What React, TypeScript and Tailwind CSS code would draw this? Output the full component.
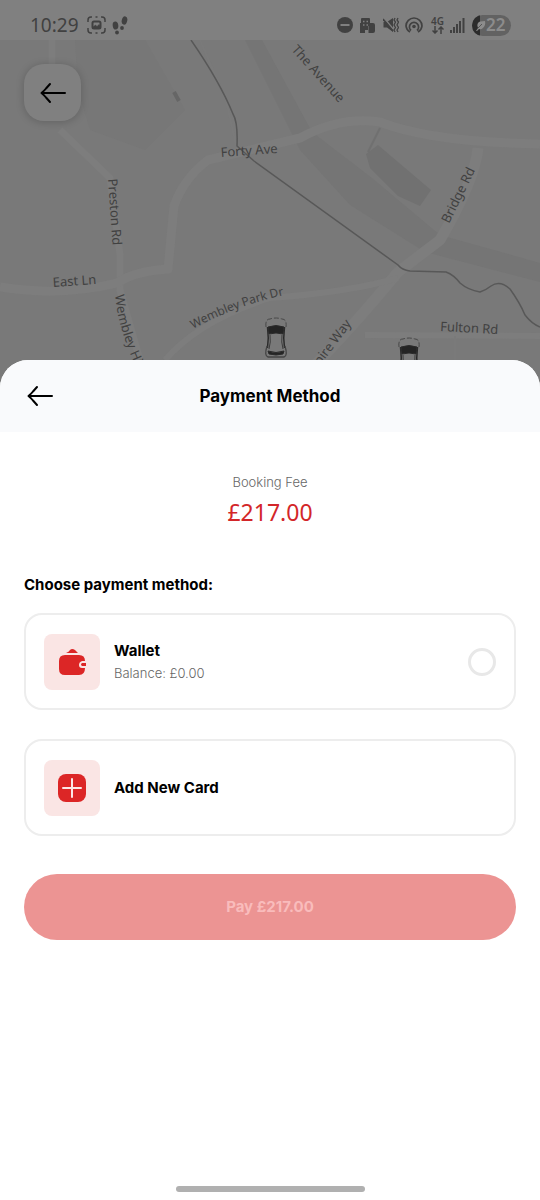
import { useState } from "react";

function BackArrow() {
  return (
    <svg width="26" height="22" viewBox="0 0 26 22" fill="none" stroke="currentColor" strokeWidth="2" strokeLinecap="round" strokeLinejoin="round" aria-hidden="true">
      <path d="M25 11H1.500M10 2L6 6.500Q4 9 1.500 11Q4 13 6 15.500L10 20" />
    </svg>
  );
}

function StatusBar() {
  return (
    <div className="flex h-10 items-center justify-between bg-[#808080] pt-[10px] pr-[29px] pl-[30px] text-[#414141]">
      <div className="flex items-center">
        <span className="mr-2 font-['Noto_Sans'] text-[19px] leading-6">10:29</span>

        {/* Screenshot */}
        <svg className="mr-[6px]" width="19" height="18" viewBox="0 0 19 18" fill="none" stroke="currentColor" strokeWidth="1.500">
          <path d="M1 6V4Q1 1 4 1H5M8.500 1H10.500M14 1H15Q18 1 18 4V6M18 12V14Q18 17 15 17H14M10.500 17H8.500M5 17H4Q1 17 1 14V12" />
          <rect x="5.500" y="5.500" width="8" height="7" rx="1.500" strokeWidth="2" />
          <path d="M6 11L8.500 9L10 10.500L12 8.500L13 10V12H6Z" fill="currentColor" strokeWidth="0.500" />
        </svg>

        {/* Steps */}
        <svg width="16" height="19" viewBox="0 0 16 19" fill="currentColor">
          <ellipse cx="3.500" cy="9.500" rx="2.800" ry="4" transform="rotate(-8 3.500 9.500)" />
          <circle cx="5" cy="16.500" r="1.900" />
          <ellipse cx="12.500" cy="4.500" rx="2.700" ry="4.200" transform="rotate(14 12.500 4.500)" />
          <circle cx="10" cy="12" r="1.900" />
        </svg>
      </div>

      <div className="flex items-center">
        {/* Do not disturb */}
        <svg className="mr-[7px]" width="16" height="16" viewBox="0 0 16 16">
          <circle cx="8" cy="8" r="8" fill="currentColor" />
          <path d="M3.500 8H12.500" stroke="#808080" strokeWidth="2" />
        </svg>

        {/* Building */}
        <svg className="mr-2" width="15" height="15" viewBox="0 0 15 15">
          <path d="M1 1Q1 0 2 0H9Q10 0 10 1V5H13Q15 5 15 7V13Q15 15 13 15H8V12H5V15H0V5H1Z" fill="currentColor" />
          <path d="M3 3.500H4.500M6.500 3.500H8M3 7H4.500M6.500 7H8" stroke="#808080" strokeWidth="1.300" />
          <path d="M8.500 8V15" stroke="#808080" strokeWidth="0.500" />
        </svg>

        {/* Muted */}
        <svg className="mr-[6px]" width="16" height="16" viewBox="0 0 16 16" fill="none" stroke="currentColor">
          <path d="M0.500 5H4L10 1V15L4 10.500H0.500Z" fill="currentColor" stroke="none" />
          <path d="M1 1L11 13" stroke="#808080" strokeWidth="1.500" />
          <path d="M0 2L10 14" strokeWidth="1.500" />
          <path d="M12 1L11 3L12.500 5L11 8L12.500 10.500L11 13L12 15M15 1L14 3L15.500 5L14 8L15.500 10.500L14 13L15 15" strokeWidth="1.300" />
        </svg>

        {/* Hotspot */}
        <svg className="mr-2" width="18" height="16" viewBox="0 0 18 16" fill="none" stroke="currentColor" strokeWidth="1.700">
          <circle cx="9" cy="9.500" r="1.800" fill="currentColor" stroke="none" />
          <path d="M5 15A8 8 0 0 1 1 9A8 8 0 0 1 17 9A8 8 0 0 1 13 15" />
          <path d="M6 13.500A4.600 4.600 0 1 1 12 13.500" />
        </svg>

        <div className="mr-[6px] flex flex-col items-center">
          <span className="font-['Noto_Sans'] text-[10px] font-semibold leading-[10px]">4G</span>
          <svg width="12" height="8" viewBox="0 0 12 8" fill="none" stroke="currentColor" strokeWidth="1.500">
            <path d="M3 0V7M0.500 4.500L3 7L5.500 4.500M9 8V1M6.500 3.500L9 1L11.500 3.500" />
          </svg>
        </div>

        <svg className="mr-[7px]" width="15" height="15" viewBox="0 0 15 15" fill="currentColor">
          <rect x="0" y="12" width="2" height="3" />
          <rect x="3" y="9" width="2" height="6" />
          <rect x="6" y="6" width="2" height="9" />
          <rect x="9" y="3" width="2" height="12" />
          <rect x="12.500" y="0" width="2" height="15" />
        </svg>

        {/* Battery */}
        <div className="flex h-[21px] w-[39px] items-center overflow-hidden rounded-full bg-[#626262]">
          <svg width="14" height="21" viewBox="0 0 14 21">
            <path d="M0 0H8V21H0Z" fill="#2c2c2c" />
            <path d="M4 16L6 13Q4 8 8 6.500Q11 6 13 6Q14 10 11 13Q9 15 7 14L5 16Z" fill="#8c8c8c" />
            <path d="M6 13L10 9" stroke="#555" />
          </svg>
          <span className="font-['Noto_Sans'] text-[17px] font-semibold leading-5 text-[#8c8c8c]">22</span>
        </div>
      </div>
    </div>
  );
}

function Car() {
  return (
    <g fill="none" stroke="#2b2b2b">
      <path d="M1 9Q0 1 5 1Q11 -1 17 1Q22 1 21 9" strokeWidth="1" strokeDasharray="5 2" stroke="#484848" />
      <path d="M3 9Q11 6 19 9L18 16Q11 14 4 16Z" fill="#242424" />
      <path d="M2.500 9Q4 20 2.500 30M19.500 9Q18 20 19.500 30" strokeWidth="1.500" />
      <path d="M5 17Q6 24 4 31M17 17Q16 24 18 31" strokeWidth="0.800" />
      <path d="M3 33Q11 36 19 33L18 36Q11 38 4 36Z" fill="#242424" />
      <path d="M2 28Q-1 38 3 39H19Q23 38 20 28" strokeWidth="1.300" stroke="#444444" />
    </g>
  );
}

function StreetMap() {
  return (
    <svg className="block h-full w-full" viewBox="0 40 540 350" preserveAspectRatio="xMidYMin slice" role="img" aria-label="Map of Wembley">
      <defs>
        <path id="park-drive" d="M193 329Q240 303 295 293" />
        <path id="wembley-hill" d="M115 295Q119 334 139 372" />
      </defs>

      <rect y="40" width="540" height="350" fill="#797979" />

      {/* Parkland */}
      <path d="M75 40H145L185 110L145 150L90 130L78 90Z" fill="#777777" />
      <path d="M245 40H262L312 132L372 178L440 235L540 263V282L425 252L350 205L300 150Z" fill="#757575" />
      <path d="M366 154L378 145L431 190L420 206L398 196L370 168Z" fill="#717171" />
      <path d="M368 152L380 128" stroke="#707070" strokeWidth="2" fill="none" />
      <path d="M174 92L179 101" stroke="#666666" strokeWidth="4" />

      {/* Roads */}
      <g fill="none" stroke="#7d7d7d" strokeLinejoin="round">
        <path d="M52 40V66M60 130L110 178L120 255V290L140 360" strokeWidth="7" />
        <path d="M0 287Q60 297 117 283Q135 271 168 269L174 206Q184 178 208 160L300 138Q340 116 380 122Q430 142 540 144" strokeWidth="9" />
        <path d="M478 148Q475 180 440 240L398 272Q350 330 310 370" strokeWidth="11" />
        <path d="M398 278Q350 292 270 298Q200 320 165 360M365 335L540 336" strokeWidth="6" />
        <path d="M200 40L226 100L236 145M455 336V390" strokeWidth="2" stroke="#7a7a7a" />
      </g>

      {/* Railway and river */}
      <path d="M191 40Q220 82 233 114Q238 122 237 146L254 161L398 265Q402 270 410 271L446 272Q454 275 460 283Q468 290 480 292Q486 290 491 286Q500 280 510 289Q520 303 525 315Q532 324 540 327" fill="none" stroke="#585858" strokeWidth="1.500" />

      <g className="font-['Noto_Sans'] text-[13px]" fill="#414141">
        <text transform="translate(291 50) rotate(48)">The Avenue</text>
        <text transform="translate(221 157) rotate(-4)">Forty Ave</text>
        <text transform="translate(108 179) rotate(86)">Preston Rd</text>
        <text transform="translate(449 224) rotate(-64)">Bridge Rd</text>
        <text transform="translate(53 287) rotate(-4)">East Ln</text>
        <text className="text-[12px]">
          <textPath href="#park-drive">Wembley Park Dr</textPath>
        </text>
        <text>
          <textPath href="#wembley-hill">Wembley Hi</textPath>
        </text>
        <text transform="translate(320 366) rotate(-53)">pire Way</text>
        <text transform="translate(440 331) rotate(3)">Fulton Rd</text>
      </g>

      <g transform="translate(265 318)">
        <Car />
      </g>
      <g transform="translate(398 338)">
        <Car />
      </g>
    </svg>
  );
}

function WalletIcon() {
  return (
    <svg width="28" height="28" viewBox="0 0 28 28" fill="#dc2626" aria-hidden="true">
      <path d="M8 5Q11 4 12 2Q14 0 17 2L20 5Z" />
      <path d="M7 7H21Q27 7 27 13H24Q21 14 21 17Q21 20 24 20H27Q27 27 21 27H7Q1 27 1 21V13Q1 7 7 7Z" />
      <path d="M24 15H28V18H24Q22 16.500 24 15Z" />
    </svg>
  );
}

function AddIcon() {
  return (
    <svg width="28" height="28" viewBox="0 0 28 28" aria-hidden="true">
      <rect width="28" height="28" rx="8" fill="#dc2626" />
      <path d="M14 5V23M5 14H23" stroke="#fce7e6" strokeWidth="2" strokeLinecap="round" />
    </svg>
  );
}

export default function App() {
  const [method, setMethod] = useState("");

  return (
    <div className="flex min-h-screen flex-col bg-white font-['Inter',sans-serif] text-black">
      <StatusBar />

      <div className="relative h-[350px]">
        <StreetMap />
        <button
          type="button"
          aria-label="Back"
          className="absolute top-6 left-6 flex size-[57px] items-center justify-center rounded-[20px] bg-[#808080] shadow-[0_1px_8px_rgba(0,0,0,0.2)]"
        >
          <BackArrow />
        </button>
      </div>

      {/* Payment Sheet */}
      <main className="relative -mt-[30px] flex flex-1 flex-col overflow-hidden rounded-t-[28px] bg-white">
        <header className="grid h-[72px] grid-cols-[1fr_auto_1fr] items-center bg-[#f9fafc] px-[27px]">
          <button type="button" aria-label="Close payment" className="justify-self-start">
            <BackArrow />
          </button>
          <h1 className="text-[17px] font-bold leading-6">Payment Method</h1>
        </header>

        <div className="flex flex-col px-6 pt-10">
          <div className="text-center">
            <p className="text-[13px] font-light leading-5 text-[#666666]">Booking Fee</p>
            <p className="mt-1 font-['Noto_Sans'] text-[23px] leading-8 text-[#d32629]">£217.00</p>
          </div>

          <h2 className="mt-[45px] text-[15px] font-bold leading-6">Choose payment method:</h2>

          <label className="mt-4 flex h-[97px] cursor-pointer items-center gap-[14px] rounded-[18px] border-2 border-[#ededed] px-[18px]">
            <span className="flex size-14 items-center justify-center rounded-lg bg-[#fae5e4]">
              <WalletIcon />
            </span>
            <span className="flex flex-1 flex-col">
              <span className="text-[15px] font-bold leading-[22px]">Wallet</span>
              <span className="text-[13px] font-light leading-[22px] text-[#666666]">Balance: £0.00</span>
            </span>
            <input
              type="radio"
              name="method"
              value="wallet"
              checked={method === "wallet"}
              onChange={() => setMethod("wallet")}
              className="size-7 appearance-none rounded-full border-[3px] border-[#e8e8e8] checked:border-8 checked:border-red-600"
            />
          </label>

          <button type="button" className="mt-[29px] flex h-[97px] items-center gap-[14px] rounded-[18px] border-2 border-[#ededed] px-[18px] text-left">
            <span className="flex size-14 items-center justify-center rounded-lg bg-[#fae5e4]">
              <AddIcon />
            </span>
            <span className="text-[15px] font-bold leading-[22px]">Add New Card</span>
          </button>

          <button type="button" disabled={!method} className="mt-[38px] h-[66px] rounded-full bg-red-600 text-[15px] font-bold text-white disabled:bg-[#ec9493] disabled:text-[#f9bcbc]">
            Pay £217.00
          </button>
        </div>

        {/* Home Indicator */}
        <div className="mx-auto mt-auto mb-2 h-[6px] w-[35%] rounded-full bg-[#b0b0b0]"></div>
      </main>
    </div>
  );
}
